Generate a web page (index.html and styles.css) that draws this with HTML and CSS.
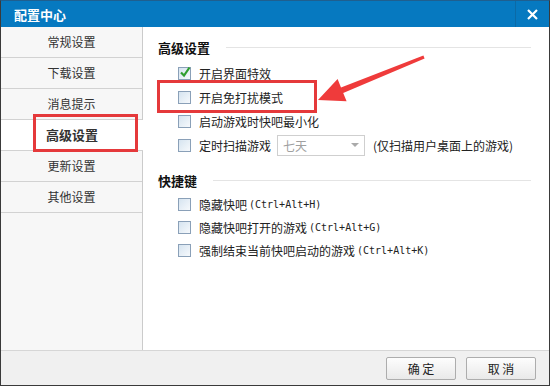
FILE: index.html
```html
<!DOCTYPE html>
<html lang="zh-CN">
<head>
  <meta charset="UTF-8">
  <title>配置中心</title>
  <link rel="stylesheet" href="styles.css">
</head>
<body>
  <div class="window">
    <div class="titlebar">
      <span class="title">配置中心</span>
      <span class="close">
        <svg width="11" height="11" viewBox="0 0 11 11"><path d="M1 1L10 10M10 1L1 10" stroke="#fff" stroke-width="2.2"/></svg>
      </span>
    </div>

    <div class="main">
      <ul class="sidebar">
        <li>常规设置</li>
        <li>下载设置</li>
        <li>消息提示</li>
        <li class="active">高级设置</li>
        <li>更新设置</li>
        <li>其他设置</li>
      </ul>

      <div class="content">
        <div class="section-title"><span>高级设置</span></div>
        <div class="rows">
          <label class="row">
            <span class="box">
              <svg class="tick" width="14" height="14" viewBox="0 0 14 14"><path d="M3 7.5L6 10.5L11.5 2.5" fill="none" stroke="#2f9e2f" stroke-width="2.2"/></svg>
            </span>
            开启界面特效
          </label>
          <label class="row"><span class="box"></span>开启免打扰模式</label>
          <label class="row"><span class="box"></span>启动游戏时快吧最小化</label>
          <label class="row">
            <span class="box"></span>定时扫描游戏
            <span class="select">七天<i class="caret"></i></span>
            <span class="note">(仅扫描用户桌面上的游戏)</span>
          </label>
        </div>

        <div class="section-title second"><span>快捷键</span></div>
        <div class="rows short">
          <label class="row"><span class="box"></span>隐藏快吧<span class="key">(Ctrl+Alt+H)</span></label>
          <label class="row"><span class="box"></span>隐藏快吧打开的游戏<span class="key">(Ctrl+Alt+G)</span></label>
          <label class="row"><span class="box"></span>强制结束当前快吧启动的游戏<span class="key">(Ctrl+Alt+K)</span></label>
        </div>
      </div>
    </div>

    <div class="footer">
      <button>确 定</button>
      <button>取 消</button>
    </div>

    <!-- annotations drawn over the dialog -->
    <div class="mark mark-side"></div>
    <div class="mark mark-row"></div>
    <svg class="arrow" width="550" height="386" viewBox="0 0 550 386">
      <polygon points="318,100 337.6,79.1 341,87.4 423.4,55.6 424.6,58.4 343.2,93 346.6,101.3" fill="#ef3b3b"/>
    </svg>
  </div>
</body>
</html>
```

FILE: styles.css
```css
html, body { margin: 0; padding: 0; }
body { font-family: "Noto Sans CJK SC", "Liberation Sans", sans-serif; font-size: 12px; color: #222; background: #fff; }

.window { position: relative; width: 548px; height: 384px; border: 1px solid #3a3a3a; border-top-color: #1f5f8f; background: #fff; display: flex; flex-direction: column; overflow: hidden; }

.titlebar { height: 26px; background: #0679c0; display: flex; align-items: center; justify-content: space-between; }
.title { color: #fff; font-weight: bold; font-size: 13px; padding-left: 13px; }
.close { width: 33px; height: 26px; border-left: 1px solid #0b6aa6; display: flex; align-items: center; justify-content: center; }

.main { flex: 1; display: flex; min-height: 0; }

.sidebar { list-style: none; margin: 0; padding: 0; width: 141px; background: #f7f7f7; border-right: 1px solid #cbcbcb; }
.sidebar li { height: 30px; line-height: 30px; text-align: center; border-bottom: 1px solid #d2d2d2; color: #333; }
.sidebar li.active { background: #fff; font-weight: bold; font-size: 13px; margin-right: -1px; }

.content { flex: 1; padding: 12px 18px 0 15px; }

.section-title { display: flex; align-items: center; height: 16px; font-weight: bold; font-size: 13px; color: #111; }
.section-title::after { content: ""; flex: 1; height: 1px; background: #e4e4e4; margin-left: 16px; }
.section-title.second { margin-top: 15px; }

.rows { margin-top: 6px; padding-left: 20px; }
.rows.short { margin-top: 5px; }
.row { display: flex; align-items: center; height: 24px; white-space: nowrap; color: #222; }
.rows.short .row { height: 23px; }

.box { position: relative; width: 11px; height: 11px; border: 1px solid #8aa0b8; background: linear-gradient(135deg, #d6e4f0, #f6f9fc); margin-right: 8px; flex-shrink: 0; }
.tick { position: absolute; left: -1px; top: -3px; }

.select { display: inline-flex; align-items: center; justify-content: space-between; width: 76px; height: 19px; border: 1px solid #cfcfcf; margin-left: 6px; padding: 0 5px; color: #a0a0a0; }
.caret { width: 0; height: 0; border-left: 4px solid transparent; border-right: 4px solid transparent; border-top: 4px solid #aaa; }
.note { margin-left: 8px; }

.key { font-family: "DejaVu Sans Mono", "Liberation Mono", monospace; font-size: 10px; margin-left: 2px; }

.footer { height: 34px; background: #f0f0f0; border-top: 1px solid #d6d6d6; display: flex; align-items: center; justify-content: flex-end; gap: 10px; padding-right: 13px; }
.footer button { width: 70px; height: 23px; border: 1px solid #adadad; border-radius: 2px; background: linear-gradient(#fdfdfd, #e9e9e9); font-family: inherit; font-size: 12px; color: #222; padding: 0; }

.mark { position: absolute; border: 3px solid #e5393b; }
.mark-side { left: 32px; top: 113px; width: 99px; height: 32px; }
.mark-row { left: 156px; top: 79px; width: 154px; height: 27px; }
.arrow { position: absolute; left: -1px; top: -1px; pointer-events: none; }
```
